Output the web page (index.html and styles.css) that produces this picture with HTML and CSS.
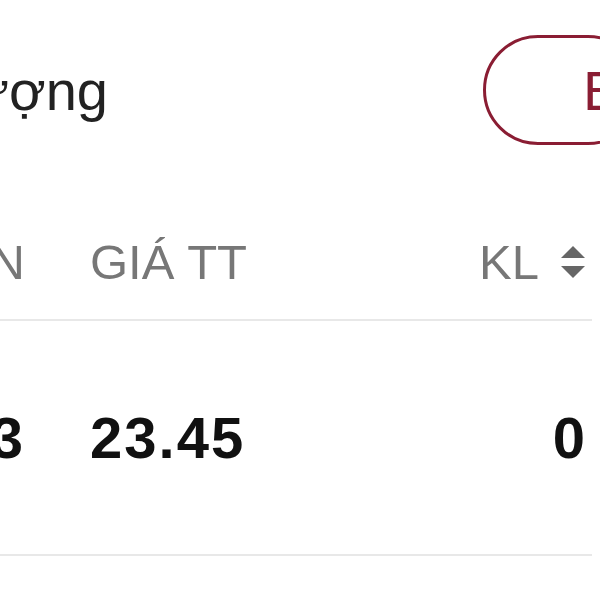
FILE: index.html
```html
<!DOCTYPE html>
<html lang="vi">
<head>
    <meta charset="UTF-8">
    <meta name="viewport" content="width=device-width, initial-scale=1.0">
    <title>Danh mục</title>
    <link rel="stylesheet" href="styles.css">
</head>
<body>
    <div class="screen">
        <div class="toolbar">
            <h2 class="title">Số lượng</h2>
            <button class="sell-button">Bán</button>
        </div>

        <div class="holdings">
            <div class="row head">
                <span class="cell cost">GIÁ VỐN</span>
                <span class="cell price">GIÁ TT</span>
                <span class="cell volume">
                    KL
                    <svg class="sort-icon" viewBox="0 0 24 32" width="24" height="32">
                        <path d="M12 0 L24 12 L0 12 Z" fill="#666"/>
                        <path d="M0 20 L24 20 L12 32 Z" fill="#666"/>
                    </svg>
                </span>
            </div>
            <div class="row">
                <span class="cell cost value">22.83</span>
                <span class="cell price value">23.45</span>
                <span class="cell volume value">0</span>
            </div>
        </div>
    </div>
</body>
</html>
```

FILE: styles.css
```css
html, body {
    overflow: hidden;
}

body {
    margin: 0;
    padding: 0;
    font-family: "Liberation Sans", Arial, sans-serif;
    background-color: #fff;
    color: #111;
}

.screen {
    width: 1043px;
    margin-left: -400px;
}

.toolbar {
    display: flex;
    align-items: center;
    margin-top: 35px;
    height: 110px;
}

.title {
    flex: 1;
    margin: 0 0 0 275px;
    font-size: 56px;
    font-weight: normal;
    color: #222;
}

.sell-button {
    width: 160px;
    height: 110px;
    padding: 0 0 0 97px;
    border: 3px solid #8a1d33;
    border-radius: 55px;
    background: #fff;
    color: #8a1d33;
    font-family: inherit;
    font-size: 56px;
    text-align: left;
    white-space: nowrap;
    overflow: hidden;
}

.holdings {
    margin: 60px 51px 0 0;
}

.row {
    display: grid;
    grid-template-columns: 425px 65px 1fr;
    align-items: center;
    box-sizing: border-box;
    height: 235px;
    border-bottom: 2px solid #e8e8e8;
}

.row.head {
    height: 116px;
    color: #777;
    font-size: 49px;
}

.cell.cost {
    grid-column: 1;
    grid-row: 1;
    text-align: right;
}

.cell.price {
    grid-column: 3;
    grid-row: 1;
}

.cell.volume {
    grid-column: 3;
    grid-row: 1;
    justify-self: end;
    padding-right: 7px;
    display: flex;
    align-items: center;
    gap: 22px;
}

.value {
    font-size: 58px;
    font-weight: bold;
    letter-spacing: 2px;
}

.row:not(.head) .cell.volume {
    padding-right: 5px;
}
```
